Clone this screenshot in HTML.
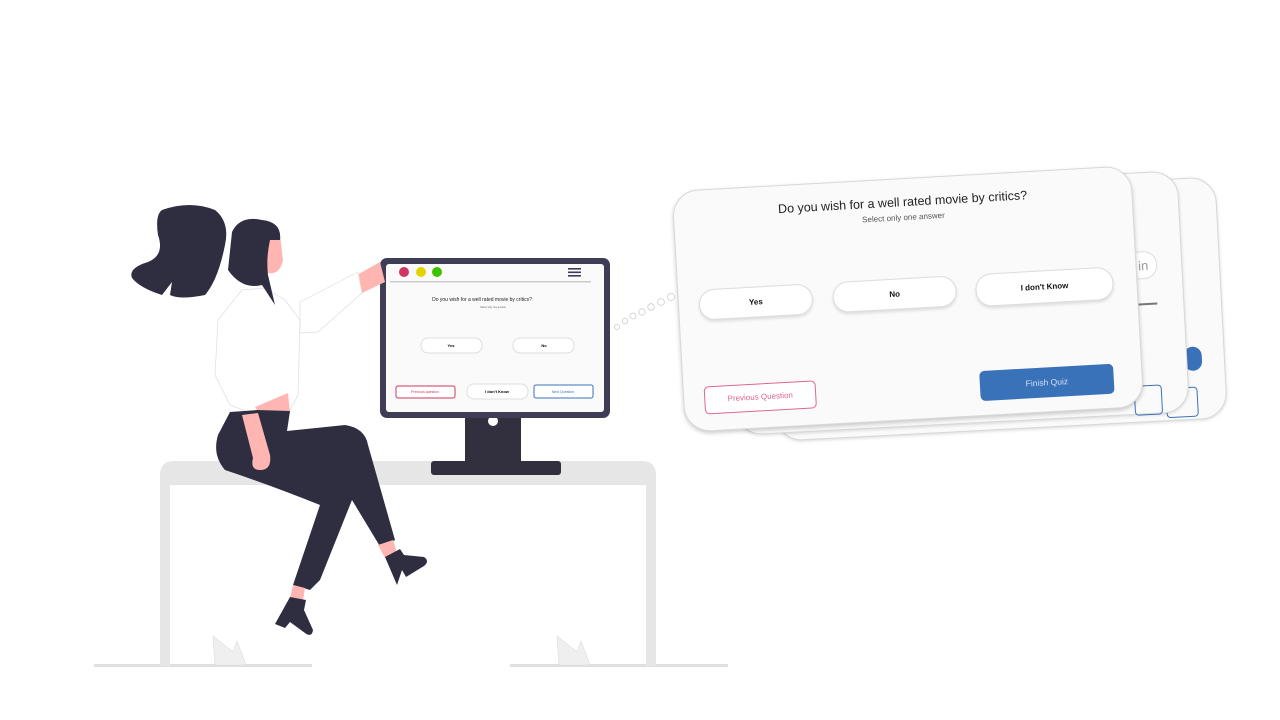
<!DOCTYPE html>
<html><head><meta charset="utf-8"><style>
html,body{margin:0;padding:0;background:#fff;width:1280px;height:720px;overflow:hidden;font-family:"Liberation Sans",sans-serif}
.card{position:absolute;background:#fafafa;border:1px solid #d8d8d8;border-radius:26px;box-shadow:0 1px 3px rgba(0,0,0,.15)}
.btn{position:absolute;background:#fff;border:1.5px solid #ddd;border-radius:16px;box-shadow:0 2px 3px rgba(0,0,0,.12);font-weight:bold;font-size:8px;color:#111;text-align:center}
</style></head><body>
<svg width="1280" height="720" style="position:absolute;left:0;top:0">
<!-- floor -->
<rect x="94" y="664" width="218" height="3" fill="#e0e0e0"/>
<rect x="510" y="664" width="218" height="3" fill="#e0e0e0"/>
<!-- desk -->
<path d="M160,475 Q160,461 174,461 L642,461 Q656,461 656,475 L656,666 L646,666 L646,485 L170,485 L170,666 L160,666 Z" fill="#e6e6e6"/>
<path d="M213,636 L233,652 L237,641 L246,665 L215,665 Z" fill="#efefef" stroke="#ddd" stroke-width=".6"/>
<path d="M557,636 L577,652 L581,641 L590,665 L559,665 Z" fill="#efefef" stroke="#ddd" stroke-width=".6"/>
<!-- monitor -->
<rect x="465" y="414" width="56" height="50" fill="#32303f"/>
<circle cx="493" cy="421" r="5" fill="#fff"/>
<rect x="431" y="461" width="130" height="14" rx="3" fill="#32303f"/>
<rect x="380" y="258" width="230" height="160" rx="7" fill="#3f3d56"/>
<rect x="386" y="264" width="218" height="148" rx="3" fill="#fafafa"/>
<circle cx="404" cy="272" r="5" fill="#d0365f"/>
<circle cx="421" cy="272" r="5" fill="#e3d400"/>
<circle cx="437" cy="272" r="5" fill="#3ec100"/>
<rect x="568" y="268" width="13" height="1.6" fill="#3f3d56"/>
<rect x="568" y="271.5" width="13" height="1.6" fill="#3f3d56"/>
<rect x="568" y="275" width="13" height="1.6" fill="#3f3d56"/>
<rect x="390" y="281" width="201" height="1.5" fill="#ccc"/>
<text x="482" y="301" font-size="5" text-anchor="middle" fill="#222">Do you wish for a well rated movie by critics?</text>
<text x="493" y="308" font-size="2.5" text-anchor="middle" fill="#666">Select only one answer</text>
<rect x="421" y="338" width="61" height="15" rx="7" fill="#fff" stroke="#ddd"/>
<text x="451" y="347" font-size="4" font-weight="bold" text-anchor="middle">Yes</text>
<rect x="513" y="338" width="61" height="15" rx="7" fill="#fff" stroke="#ddd"/>
<text x="544" y="347" font-size="4" font-weight="bold" text-anchor="middle">No</text>
<rect x="396" y="386" width="59" height="12" rx="2" fill="#fff" stroke="#d0365f"/>
<text x="425" y="393" font-size="3.5" text-anchor="middle" fill="#d0365f">Previous question</text>
<rect x="467" y="384" width="61" height="15" rx="7" fill="#fff" stroke="#ddd"/>
<text x="497" y="393" font-size="4" font-weight="bold" text-anchor="middle">I don't Know</text>
<rect x="534" y="385" width="59" height="13" rx="2" fill="#fff" stroke="#3a72b9"/>
<text x="563" y="393" font-size="3.5" text-anchor="middle" fill="#3a72b9">Next Question</text>
<!-- dots trail -->
<g fill="#fff" stroke="#ccc" stroke-width=".8">
<circle cx="617" cy="327" r="2.5"/><circle cx="625" cy="321" r="2.8"/><circle cx="633" cy="316" r="3"/><circle cx="642" cy="312" r="3.2"/><circle cx="651" cy="307" r="3.3"/><circle cx="661" cy="302" r="3.4"/><circle cx="671" cy="297" r="3.5"/>
</g>
<!-- woman -->
<g>
<path d="M357,275 L380,262 L385,282 L362,293 Z" fill="#ffb6b3"/>
<path d="M300,302 L358,272 L362,293 L318,332 L300,333 Z" fill="#fff" stroke="#ddd" stroke-width=".7"/>
<path d="M242,290 L265,288 L285,300 L300,320 L298,395 L290,410 L255,415 L230,405 L215,375 L218,320 Z" fill="#fff" stroke="#ddd" stroke-width=".7"/>
<path d="M255,407 L288,393 L290,413 L260,415 Z" fill="#ffb6b3"/>
<path d="M230,412 L258,410 L290,411 L287,431 L345,425 Q365,428 368,445 L395,540 L381,548 L352,500 L320,580 L310,590 L293,585 L320,505 Q270,485 225,470 Q212,455 218,435 Z" fill="#2f2e41"/>
<path d="M242,415 L258,413 L270,455 Q272,470 260,470 Q250,470 253,458 Z" fill="#ffb6b3"/>
<path d="M378,545 L393,540 L397,553 L385,558 Z" fill="#ffb6b3"/>
<path d="M385,557 L400,549 L404,555 L424,557 Q430,561 424,566 L406,577 L402,570 L397,585 Z" fill="#2f2e41"/>
<path d="M293,585 L305,588 L303,600 L290,598 Z" fill="#ffb6b3"/>
<path d="M290,597 L306,600 L304,610 L313,630 Q312,638 305,633 L290,622 L285,628 L275,624 Z" fill="#2f2e41"/>
<path d="M258,240 Q265,222 280,235 L283,260 Q280,275 268,273 Z" fill="#ffb6b3"/>
<path d="M232,232 Q240,215 262,220 Q282,222 280,240 L270,240 Q266,258 268,275 L275,305 L262,285 Q242,290 228,270 Z" fill="#2f2e41"/>
<path d="M162,210 Q190,200 215,210 Q230,222 225,245 Q218,280 205,295 Q180,300 170,295 L172,282 L162,295 Q140,288 132,278 Q128,268 148,262 Q165,255 158,235 Q155,215 162,210 Z" fill="#2f2e41"/>
</g>
</svg>

<!-- back cards -->
<div class="card" style="left:770px;top:188px;width:450px;height:240px;transform:rotate(-3deg)">
<div style="position:absolute;right:28px;top:208px;width:30px;height:28px;border:1px solid #3a72b9;border-radius:4px"></div>
<div style="position:absolute;right:22px;top:168px;width:18px;height:24px;background:#3a72b9;border-radius:10px"></div>
</div>
<div class="card" style="left:730px;top:182px;width:452px;height:240px;transform:rotate(-3deg)">
<div style="position:absolute;right:24px;top:78px;width:60px;height:28px;background:#fff;border:1px solid #ddd;border-radius:16px;font-size:13px;color:#999;line-height:28px;text-align:right;padding-right:8px;box-sizing:border-box">in</div>
<div style="position:absolute;right:26px;top:130px;width:30px;height:2px;background:#777"></div>
<div style="position:absolute;right:26px;top:212px;width:26px;height:28px;border:1px solid #3a72b9;border-radius:4px"></div>
</div>
<!-- front card -->
<div class="card" style="left:678px;top:178px;width:458px;height:240px;transform:rotate(-3.2deg);box-shadow:0 2px 4px rgba(0,0,0,.2)">
<div style="position:absolute;left:0;right:0;top:16px;text-align:center;font-size:12.5px;color:#222">Do you wish for a well rated movie by critics?</div>
<div style="position:absolute;left:0;right:0;top:34px;text-align:center;font-size:8px;color:#555">Select only one answer</div>
<div class="btn" style="left:20px;top:99px;width:112px;height:29px;line-height:29px">Yes</div>
<div class="btn" style="left:154px;top:99px;width:122px;height:29px;line-height:29px">No</div>
<div class="btn" style="left:297px;top:99px;width:136px;height:31px;line-height:31px">I don't Know</div>
<div style="position:absolute;left:20px;top:196px;width:110px;height:26px;border:1px solid #e06690;border-radius:5px;font-size:8px;color:#e06690;text-align:center;line-height:26px;background:#fff">Previous Question</div>
<div style="position:absolute;left:296px;top:196px;width:134px;height:30px;background:#3a72b9;border-radius:5px;font-size:8.5px;color:#cfe0f5;text-align:center;line-height:30px">Finish Quiz</div>
</div>
</body></html>
